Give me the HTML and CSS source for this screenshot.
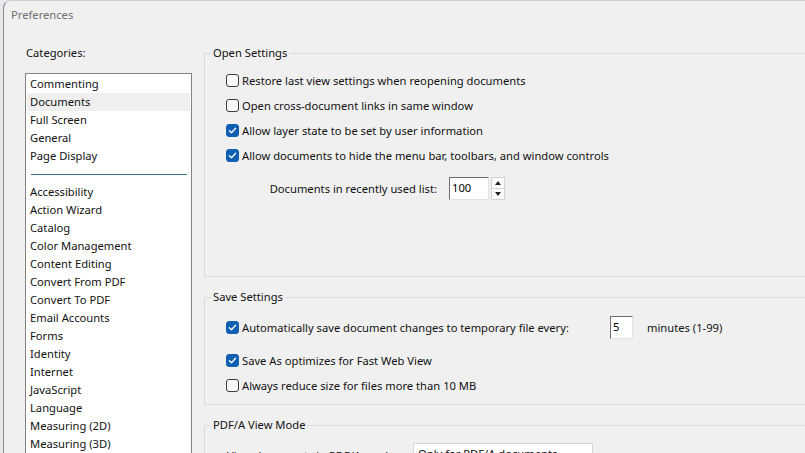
FILE: index.html
```html
<!DOCTYPE html>
<html lang="en">
<head>
    <meta charset="UTF-8">
    <meta name="viewport" content="width=device-width, initial-scale=1.0">
    <title>Preferences</title>
    <link rel="stylesheet" href="styles.css">
</head>
<body>
    <div class="window">
        <div class="titlebar">Preferences</div>
        <div class="content">
            <div class="sidebar">
                <div class="sidebar-label">Categories:</div>
                <ul class="category-list">
                    <li>Commenting</li>
                    <li class="selected">Documents</li>
                    <li>Full Screen</li>
                    <li>General</li>
                    <li>Page Display</li>
                    <li class="separator"></li>
                    <li>Accessibility</li>
                    <li>Action Wizard</li>
                    <li>Catalog</li>
                    <li>Color Management</li>
                    <li>Content Editing</li>
                    <li>Convert From PDF</li>
                    <li>Convert To PDF</li>
                    <li>Email Accounts</li>
                    <li>Forms</li>
                    <li>Identity</li>
                    <li>Internet</li>
                    <li>JavaScript</li>
                    <li>Language</li>
                    <li>Measuring (2D)</li>
                    <li>Measuring (3D)</li>
                </ul>
            </div>
            <div class="panel">
                <fieldset class="group">
                    <legend>Open Settings</legend>
                    <div class="group-body group-open">
                        <label class="check-row"><span class="checkbox"></span>Restore last view settings when reopening documents</label>
                        <label class="check-row"><span class="checkbox"></span>Open cross-document links in same window</label>
                        <label class="check-row"><span class="checkbox checked"><svg viewBox="0 0 13 13"><path d="M3.4 6.7 5.5 8.7 9.6 4.3"/></svg></span>Allow layer state to be set by user information</label>
                        <label class="check-row"><span class="checkbox checked"><svg viewBox="0 0 13 13"><path d="M3.4 6.7 5.5 8.7 9.6 4.3"/></svg></span>Allow documents to hide the menu bar, toolbars, and window controls</label>
                        <div class="field-row">
                            <span class="field-label">Documents in recently used list:</span>
                            <span class="text-input input-recent">100</span>
                            <span class="spinner">
                                <span class="spin-btn"><span class="arrow-up"></span></span>
                                <span class="spin-btn"><span class="arrow-down"></span></span>
                            </span>
                        </div>
                    </div>
                </fieldset>

                <fieldset class="group">
                    <legend>Save Settings</legend>
                    <div class="group-body group-save">
                        <div class="autosave-row">
                            <label class="check-label"><span class="checkbox checked"><svg viewBox="0 0 13 13"><path d="M3.4 6.7 5.5 8.7 9.6 4.3"/></svg></span>Automatically save document changes to temporary file every:</label>
                            <span class="text-input input-minutes">5</span>
                            <span class="units">minutes (1-99)</span>
                        </div>
                        <label class="check-row save-fast"><span class="checkbox checked"><svg viewBox="0 0 13 13"><path d="M3.4 6.7 5.5 8.7 9.6 4.3"/></svg></span>Save As optimizes for Fast Web View</label>
                        <label class="check-row"><span class="checkbox"></span>Always reduce size for files more than 10 MB</label>
                    </div>
                </fieldset>

                <fieldset class="group">
                    <legend>PDF/A View Mode</legend>
                    <div class="group-body group-pdfa">
                        <div class="select-row">
                            <span class="select-label">View documents in PDF/A mode:</span>
                            <span class="select-box">Only for PDF/A documents</span>
                        </div>
                    </div>
                </fieldset>
            </div>
        </div>
    </div>
</body>
</html>
```

FILE: styles.css
```css
body {
    margin: 0;
    background: #e7e9ee;
    font-family: "Segoe UI", "Noto Sans", sans-serif;
    font-size: 11.2px;
    color: #111;
    overflow: hidden;
    height: 453px;
}

.window {
    margin-left: 3px;
    width: 802px;
    height: 453px;
    background: #f0f0f0;
    border-left: 1px solid #8a8a8a;
    border-top: 1px solid #cfcfcf;
    border-top-left-radius: 8px;
    box-sizing: border-box;
    overflow: hidden;
}

.titlebar {
    height: 27px;
    line-height: 27px;
    padding-left: 7px;
    color: #6f6f6f;
}

.content {
    display: flex;
}

.sidebar {
    width: 200px;
    flex-shrink: 0;
    padding-left: 21px;
    box-sizing: border-box;
}

.sidebar-label {
    margin-top: 17px;
    padding-left: 1px;
    line-height: 16px;
    height: 16px;
    margin-bottom: 12px;
}

.category-list {
    list-style: none;
    margin: 0;
    padding: 1px 0 0;
    width: 167px;
    height: 400px;
    box-sizing: border-box;
    background: #fff;
    border: 1px solid #828282;
}

.category-list li {
    height: 18px;
    line-height: 18px;
    padding-left: 4px;
    white-space: nowrap;
}

.category-list li.selected {
    background: #efefef;
    margin: 0 1px;
    padding-left: 3px;
}

.category-list li.separator {
    height: 9px;
    margin: 0 4px 8px 5px;
    padding: 0;
    border-bottom: 1px solid #3b7394;
}

.panel {
    padding-top: 17px;
    flex-shrink: 0;
}

.group {
    margin: 0 0 12px 0;
    padding: 0;
    min-width: 0;
    width: 640px;
    border: 1px solid #dadada;
}

.group legend {
    margin-left: 6px;
    padding: 0 2px;
    line-height: 16px;
    height: 16px;
}

.group-body {
    padding-left: 21px;
}

.group-open {
    padding-top: 7px;
    padding-bottom: 76px;
}

.group-save {
    padding-top: 11px;
    padding-bottom: 6px;
}

.group-pdfa {
    padding-top: 10px;
    padding-left: 22px;
    height: 60px;
}

.check-row,
.check-label {
    display: flex;
    align-items: center;
    height: 25px;
    white-space: nowrap;
}

.checkbox {
    width: 13px;
    height: 13px;
    box-sizing: border-box;
    border: 1px solid #3e3e3e;
    border-radius: 3px;
    background: #f8f8f8;
    margin-right: 3px;
    flex-shrink: 0;
    display: flex;
}

.checkbox.checked {
    background: #0f5fb3;
    border-color: #0f5fb3;
}

.checkbox svg {
    width: 13px;
    height: 13px;
    margin: -1px;
}

.checkbox svg path {
    fill: none;
    stroke: #fff;
    stroke-width: 1.3;
    stroke-linecap: round;
    stroke-linejoin: round;
}

.field-row {
    display: flex;
    align-items: center;
    margin-top: 9px;
    height: 23px;
}

.field-label {
    width: 211px;
    text-align: right;
    margin-right: 12px;
    white-space: nowrap;
}

.text-input {
    height: 23px;
    box-sizing: border-box;
    background: #fff;
    border-top: 1px solid #6e6e6e;
    border-left: 1px solid #6e6e6e;
    border-right: 1px solid #e3e3e3;
    border-bottom: 1px solid #e3e3e3;
    padding-left: 2px;
    line-height: 19px;
    color: #000;
}

.input-recent {
    width: 40px;
}

.spinner {
    margin-left: 2px;
    width: 14px;
    height: 23px;
    display: flex;
    flex-direction: column;
}

.spin-btn {
    flex: 1;
    background: #fbfbfb;
    border: 1px solid #d3d3d3;
    display: flex;
    align-items: center;
    justify-content: center;
}

.spin-btn + .spin-btn {
    border-top: none;
}

.arrow-up {
    border-left: 3px solid transparent;
    border-right: 3px solid transparent;
    border-bottom: 4px solid #222;
}

.arrow-down {
    border-left: 3px solid transparent;
    border-right: 3px solid transparent;
    border-top: 4px solid #222;
}

.autosave-row {
    display: flex;
    align-items: center;
    height: 23px;
}

.check-label {
    width: 384px;
    height: 23px;
}

.input-minutes {
    width: 23px;
}

.units {
    margin-left: 14px;
    white-space: nowrap;
}

.save-fast {
    margin-top: 9px;
}

.select-row {
    display: flex;
    align-items: flex-start;
}

.select-label {
    width: 186px;
    white-space: nowrap;
    line-height: 22px;
    padding-top: 2px;
}

.select-box {
    width: 180px;
    height: 22px;
    box-sizing: border-box;
    background: #fff;
    border: 1px solid #d6d6d6;
    padding-left: 4px;
    line-height: 20px;
    white-space: nowrap;
}
```
